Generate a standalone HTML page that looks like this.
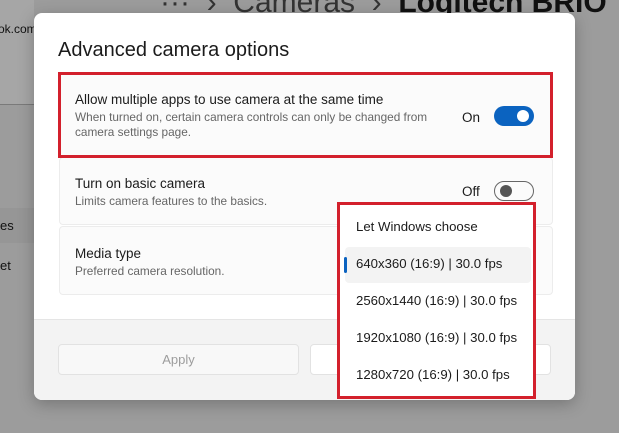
<!DOCTYPE html>
<html><head><style>
body{margin:0;width:619px;height:433px;overflow:hidden;background:#9c9c9c;font-family:"Liberation Sans",sans-serif;position:relative}
.a{position:absolute}
.dlg{left:34px;top:13px;width:541px;height:387px;background:#fff;border-radius:8px;overflow:hidden;box-shadow:0 4px 16px rgba(0,0,0,.25)}
.foot{left:0;top:306px;width:541px;height:81px;background:#f3f3f3;border-top:1px solid #e5e5e5}
.card{background:#fbfbfb;border:1px solid #ececec;border-radius:4px}
.t{font-size:13.5px;color:#1b1b1b}
.s{font-size:11.8px;color:#666}
.red{border:3px solid #d3202c;box-sizing:border-box}
.item{font-size:13.2px;color:#1b1b1b;left:16px}
</style></head><body>
<div class="a" style="left:0;top:0;width:34px;height:104px;background:#a6a6a6"></div>
<div class="a" style="left:0;top:104px;width:34px;height:1px;background:#7a7a7a"></div>
<div class="a" style="left:0;top:208px;width:34px;height:35px;background:#969696"></div>
<div class="a" style="left:-2px;top:22px;font-size:12px;color:#111">ok.com</div>
<div class="a" style="left:0;top:218px;font-size:13px;color:#111">es</div>
<div class="a" style="left:0;top:258px;font-size:13px;color:#111">et</div>
<div class="a" style="left:160px;top:-14px;font-size:30px;color:#333;white-space:nowrap">··· &nbsp;›&nbsp; Cameras &nbsp;›&nbsp; <b style="color:#111">Logitech BRIO</b></div>
<div class="a dlg">
  <div class="a" style="left:24px;top:26px;font-size:20px;color:#1b1b1b">Advanced camera options</div>
  <div class="a card" style="left:25px;top:144px;width:492px;height:66px"></div>
  <div class="a card" style="left:25px;top:213px;width:492px;height:67px"></div>
  <div class="a" style="left:41px;top:163px" ><div class="t">Turn on basic camera</div><div class="s" style="margin-top:3px">Limits camera features to the basics.</div></div>
  <div class="a t" style="left:428px;top:171px">Off</div>
  <div class="a" style="left:460px;top:168px;width:40px;height:20px;border:1px solid #666;border-radius:10px;box-sizing:border-box"></div>
  <div class="a" style="left:466px;top:172px;width:12px;height:12px;border-radius:50%;background:#555"></div>
  <div class="a" style="left:41px;top:233px"><div class="t">Media type</div><div class="s" style="margin-top:3px">Preferred camera resolution.</div></div>
  <div class="a foot">
    <div class="a" style="left:24px;top:24px;width:241px;height:31px;background:#f8f8f8;border:1px solid #e2e2e2;border-radius:4px;box-sizing:border-box;text-align:center;line-height:30px;font-size:13px;color:#9d9d9d">Apply</div>
    <div class="a" style="left:276px;top:24px;width:241px;height:31px;background:#fff;border:1px solid #e2e2e2;border-radius:4px;box-sizing:border-box"></div>
  </div>
</div>
<div class="a red" style="left:58px;top:72px;width:495px;height:86px;background:#fbfbfb"></div>
<div class="a" style="left:75px;top:92px"><div class="t">Allow multiple apps to use camera at the same time</div><div class="s" style="margin-top:3px;line-height:15px">When turned on, certain camera controls can only be changed from<br>camera settings page.</div></div>
<div class="a t" style="left:462px;top:110px">On</div>
<div class="a" style="left:494px;top:106px;width:40px;height:20px;border-radius:10px;background:#0b63c0"></div>
<div class="a" style="left:517px;top:110px;width:12px;height:12px;border-radius:50%;background:#fff"></div>
<div class="a red" style="left:337px;top:202px;width:199px;height:197px;background:#fff">
  <div class="a" style="left:5px;top:42px;width:186px;height:36px;background:#f3f3f3;border-radius:4px"></div>
  <div class="a" style="left:4px;top:52px;width:3px;height:16px;background:#0b63c0;border-radius:2px"></div>
  <div class="a item" style="top:14px">Let Windows choose</div>
  <div class="a item" style="top:51px">640x360 (16:9) | 30.0 fps</div>
  <div class="a item" style="top:88px">2560x1440 (16:9) | 30.0 fps</div>
  <div class="a item" style="top:125px">1920x1080 (16:9) | 30.0 fps</div>
  <div class="a item" style="top:162px">1280x720 (16:9) | 30.0 fps</div>
</div>
</body></html>
